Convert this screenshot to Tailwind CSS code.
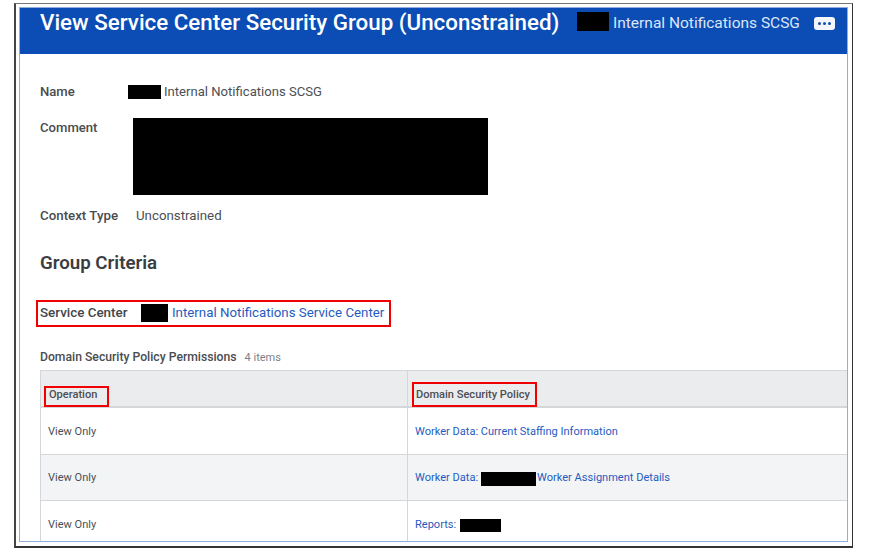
<!DOCTYPE html>
<html><head><meta charset="utf-8"><script src="https://cdn.jsdelivr.net/npm/@tailwindcss/browser@4"></script></head>
<body class="bg-white font-['Roboto',sans-serif] overflow-hidden">
<div class="w-[870px] h-[557px] pt-[3px] pl-[14px]">
<div class="w-[839px] h-[545px] border-t border-r border-l-2 border-b-2 border-t-[#777] border-r-[#333] border-l-[#444] border-b-[#333] pt-[3px] pl-[3px] bg-white">
<div class="relative w-[829px] h-[535px] border border-[#8fb0dc] overflow-hidden">
  <header class="h-[46px] bg-[#0b4db5] flex items-start pl-[20px] text-white">
    <h1 class="text-[22.35px] leading-[28px] font-medium w-[537px] whitespace-nowrap">View Service Center Security Group (Unconstrained)</h1>
    <span class="w-[32px] h-[19px] bg-black mt-[4px] mr-[4px]"></span>
    <span class="text-[15.5px] leading-[20px] text-[#dbe6f7] mt-[5px] whitespace-nowrap w-[201px]">Internal Notifications SCSG</span>
    <svg class="mt-[9px]" width="21" height="13" viewBox="0 0 21 13"><rect width="21" height="13" rx="3" fill="#f4f6fa"/><circle cx="5.5" cy="6.5" r="1.5" fill="#0b4db5"/><circle cx="10.5" cy="6.5" r="1.5" fill="#0b4db5"/><circle cx="15.5" cy="6.5" r="1.5" fill="#0b4db5"/></svg>
  </header>
  <main class="pl-[20px] text-[#4b4f54]">
    <div class="flex items-center h-[18px] mt-[29px] text-[13.1px]">
      <span class="w-[88px] font-medium text-[#494c50]">Name</span>
      <span class="w-[33px] h-[14px] bg-black mr-[3px]"></span>
      <span>Internal Notifications SCSG</span>
    </div>
    <div class="flex mt-[17px]">
      <span class="w-[93px] text-[13.1px] leading-[18px] font-medium text-[#494c50] pt-[1px]">Comment</span>
      <span class="w-[355px] h-[77px] bg-black"></span>
    </div>
    <div class="flex items-center h-[18px] mt-[12px] text-[13.3px]">
      <span class="w-[96px] font-medium text-[#494c50]">Context Type</span>
      <span>Unconstrained</span>
    </div>
    <h2 class="text-[18.7px] leading-[24px] font-semibold text-[#3a3d41] mt-[26px]">Group Criteria</h2>
    <div class="flex items-center h-[20px] mt-[28px] text-[13.4px]">
      <span class="w-[101px] font-medium text-[#43464a]">Service Center</span>
      <span class="w-[27px] h-[18px] bg-black mr-[4px]"></span>
      <span class="text-[#1f5cc0] text-[13.3px]">Internal Notifications Service Center</span>
    </div>
    <div class="flex items-baseline mt-[26px] h-[16px] leading-[16px]">
      <span class="text-[12.2px] font-medium text-[#494c50]">Domain Security Policy Permissions</span>
      <span class="text-[11px] text-[#7c8288] ml-[8px]">4 items</span>
    </div>
    <div class="mt-[5px] border-l border-[#d4d6d9] text-[11.05px]">
      <div class="flex h-[38px] bg-[#ebecee] border-y-2 border-t border-[#d4d6d9] font-medium text-[#4b4e52]">
        <div class="w-[367px] border-r border-[#d4d6d9] pl-[8px] pt-[16px] leading-[16px]">Operation</div>
        <div class="flex-1 pl-[8px] pt-[16px] leading-[16px]">Domain Security Policy</div>
      </div>
      <div class="flex h-[47px] items-stretch border-b border-[#d4d6d9]">
        <div class="w-[367px] border-r border-[#d4d6d9] pl-[7px] pt-[2px] flex items-center">View Only</div>
        <div class="flex-1 pl-[7px] pt-[2px] flex items-center text-[#1f5cc0]">Worker Data: Current Staffing Information</div>
      </div>
      <div class="flex h-[46px] items-stretch border-b border-[#d4d6d9] bg-[#f3f4f6]">
        <div class="w-[367px] border-r border-[#d4d6d9] pl-[7px] pt-[2px] flex items-center">View Only</div>
        <div class="flex-1 pl-[7px] pt-[2px] flex items-center text-[#1f5cc0]">Worker Data:<span class="w-[55px] h-[14px] bg-black ml-[3px] mr-[1px]"></span>Worker Assignment Details</div>
      </div>
      <div class="flex h-[46px] items-stretch">
        <div class="w-[367px] border-r border-[#d4d6d9] pl-[7px] pt-[2px] flex items-center">View Only</div>
        <div class="flex-1 pl-[7px] pt-[2px] flex items-center text-[#1f5cc0]">Reports:<span class="w-[41px] h-[13px] bg-black ml-[4px]"></span></div>
      </div>
    </div>
  </main>
  <div class="absolute left-[16px] top-[292px] w-[355px] h-[27px] border-2 border-[#f00000]"></div>
  <div class="absolute left-[24px] top-[378px] w-[65px] h-[21px] border-2 border-[#f00000]"></div>
  <div class="absolute left-[392px] top-[374px] w-[125px] h-[25px] border-2 border-[#f00000]"></div>
</div>
</div>
</div>
</body></html>
